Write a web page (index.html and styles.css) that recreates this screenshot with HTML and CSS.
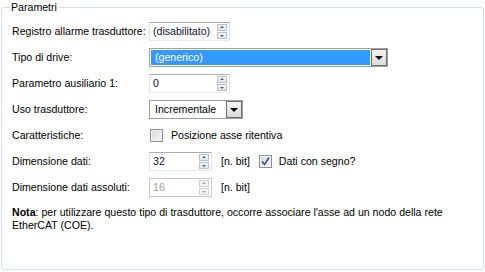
FILE: index.html
```html
<!DOCTYPE html>
<html lang="it">
<head>
    <meta charset="UTF-8">
    <title>Parametri</title>
    <link rel="stylesheet" href="styles.css">
</head>
<body>
    <fieldset class="group">
        <legend>Parametri</legend>

        <div class="row">
            <label>Registro allarme trasduttore:</label>
            <div class="spin wide">
                <span class="spin-text">(disabilitato)</span>
                <span class="spin-buttons"><i class="up"></i><i class="down"></i></span>
            </div>
        </div>

        <div class="row">
            <label>Tipo di drive:</label>
            <div class="combo long">
                <span class="combo-text selected">(generico)</span>
                <span class="combo-button"><i></i></span>
            </div>
        </div>

        <div class="row">
            <label>Parametro ausiliario 1:</label>
            <div class="spin wide">
                <span class="spin-text">0</span>
                <span class="spin-buttons"><i class="up"></i><i class="down"></i></span>
            </div>
        </div>

        <div class="row">
            <label>Uso trasduttore:</label>
            <div class="combo short">
                <span class="combo-text">Incrementale</span>
                <span class="combo-button"><i></i></span>
            </div>
        </div>

        <div class="row">
            <label>Caratteristiche:</label>
            <div class="inline">
                <span class="check"></span>
                <span class="check-label">Posizione asse ritentiva</span>
            </div>
        </div>

        <div class="row">
            <label>Dimensione dati:</label>
            <div class="inline">
                <div class="spin narrow">
                    <span class="spin-text">32</span>
                    <span class="spin-buttons"><i class="up"></i><i class="down"></i></span>
                </div>
                <span class="unit">[n. bit]</span>
                <span class="check checked">
                    <svg width="11" height="11" viewBox="0 0 11 11"><path d="M2 5.5 L4.5 8.5 L9 1.5" fill="none" stroke="#3a4fa8" stroke-width="1.6"/></svg>
                </span>
                <span class="check-label">Dati con segno?</span>
            </div>
        </div>

        <div class="row">
            <label>Dimensione dati assoluti:</label>
            <div class="inline">
                <div class="spin narrow disabled">
                    <span class="spin-text">16</span>
                    <span class="spin-buttons"><i class="up"></i><i class="down"></i></span>
                </div>
                <span class="unit">[n. bit]</span>
            </div>
        </div>

        <p class="note"><b>Nota</b>: per utilizzare questo tipo di trasduttore, occorre associare l'asse ad un nodo della rete EtherCAT (COE).</p>
    </fieldset>
</body>
</html>
```

FILE: styles.css
```css
body {
    margin: 0;
    background: #ffffff;
    font-family: "Liberation Sans", Arial, sans-serif;
    font-size: 10.6px;
    color: #000000;
}

.group {
    margin: 0 1px 0 1px;
    padding: 4px 10px 0 10px;
    height: 270px;
    border: 1px solid #d5dfe5;
    border-radius: 3px;
    box-sizing: border-box;
}

.group legend {
    padding: 0 1px;
    margin-left: -2px;
    line-height: 14px;
}

.row {
    display: grid;
    grid-template-columns: 137px auto;
    align-items: center;
    height: 26px;
}

.row label {
    white-space: nowrap;
}

.inline {
    display: flex;
    align-items: center;
}

/* spin box */
.spin {
    display: flex;
    height: 19px;
    box-sizing: border-box;
    border: 1px solid #abadb3;
    border-left-color: #e2e3ea;
    border-right-color: #dbdfe6;
    border-bottom-color: #e3e9ef;
    background: #ffffff;
}

.spin.wide { width: 81px; }
.spin.narrow { width: 63px; }

.spin-text {
    flex: 1;
    padding-left: 3px;
    line-height: 17px;
    color: #101030;
}

.spin-buttons {
    display: flex;
    flex-direction: column;
    justify-content: center;
    gap: 1px;
    width: 10px;
    margin-right: 2px;
}

.spin-buttons i {
    position: relative;
    height: 7px;
    box-sizing: border-box;
    border: 1px solid #b8c0c8;
    background: linear-gradient(#f6f7f9, #e0e4ea);
}

.spin-buttons i::after {
    content: "";
    position: absolute;
    left: 2px;
    border-left: 2px solid transparent;
    border-right: 2px solid transparent;
}

.spin-buttons i.up::after {
    top: 1px;
    border-bottom: 2px solid #4a5a78;
}

.spin-buttons i.down::after {
    top: 2px;
    border-top: 2px solid #4a5a78;
}

.spin.disabled .spin-text { color: #a0a0a0; }
.spin.disabled { border-color: #c9c9c9; }
.spin.disabled .spin-buttons i { border-color: #cfd2d6; background: #f4f4f4; }
.spin.disabled .spin-buttons i::after { border-top-color: #a8a8a8; border-bottom-color: #a8a8a8; }

/* combo box */
.combo {
    display: flex;
    height: 19px;
    box-sizing: border-box;
    border: 1px solid #a0a0a0;
    background: #ffffff;
}

.combo.long { width: 239px; }
.combo.short { width: 94px; }

.combo-text {
    flex: 1;
    margin: 1px;
    padding-left: 4px;
    line-height: 15px;
}

.combo-text.selected {
    background: #3399ff;
    color: #ffffff;
}

.combo-button {
    display: flex;
    align-items: center;
    justify-content: center;
    width: 16px;
    box-sizing: border-box;
    border: 1px solid #6f6f6f;
    background: linear-gradient(#f2f2f2, #dcdcdc);
}

.combo-button i {
    width: 0;
    height: 0;
    margin-top: 1px;
    border-left: 4px solid transparent;
    border-right: 4px solid transparent;
    border-top: 4px solid #000000;
}

/* check box */
.check {
    display: inline-flex;
    align-items: center;
    justify-content: center;
    width: 13px;
    height: 13px;
    box-sizing: border-box;
    margin-left: 1px;
    border: 1px solid #8f8f8f;
    background: linear-gradient(135deg, #d8d8d8, #f6f6f6);
    box-shadow: inset 0 0 0 1px #f4f4f4;
}

.check-label {
    margin-left: 8px;
}

.unit {
    margin-left: 9px;
    margin-right: 9px;
}

.unit + .check {
    margin-left: 0;
    margin-right: -1px;
}

.note {
    margin: 6px 0 0 0;
    line-height: 13px;
}
```
